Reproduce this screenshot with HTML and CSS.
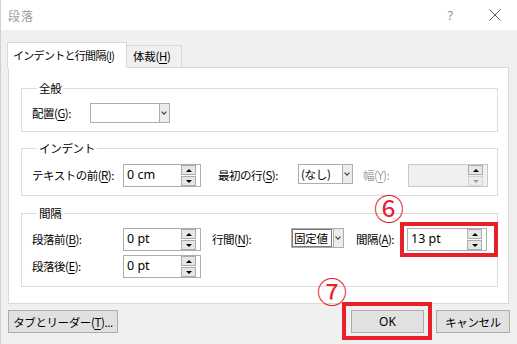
FILE: index.html
```html
<!DOCTYPE html>
<html lang="ja">
<head>
  <meta charset="UTF-8" />
  <title>段落</title>
  <link rel="stylesheet" href="styles.css">
</head>
<body>
  <div id="dialog">
    <div class="titlebar">
      <span class="title">段落</span>
      <span class="help">?</span>
      <svg class="close" width="12" height="12" viewBox="0 0 12 12">
        <path d="M0.5 0.5 L11.5 11.5 M11.5 0.5 L0.5 11.5" stroke="#5a5a5a" stroke-width="1" fill="none" />
      </svg>
    </div>

    <div class="tabs">
      <div class="tab active">インデントと行間隔(<u>I</u>)</div>
      <div class="tab">体裁(<u>H</u>)</div>
    </div>

    <div class="panel">
      <!-- 全般 -->
      <fieldset class="grp g1">
        <legend>全般</legend>
        <div class="row">
          <label class="lbl w58">配置(<u>G</u>):</label>
          <div class="combo w80"><span class="val"></span><span class="arrow"></span></div>
        </div>
      </fieldset>

      <!-- インデント -->
      <fieldset class="grp g2">
        <legend>インデント</legend>
        <div class="row">
          <label class="lbl w91">テキストの前(<u>R</u>):</label>
          <div class="spin w78"><span class="val">0 cm</span><span class="btns"><span class="up"></span><span class="dn"></span></span></div>
          <label class="lbl w80 ml17">最初の行(<u>S</u>):</label>
          <div class="combo w55"><span class="val">(なし)</span><span class="arrow"></span></div>
          <label class="lbl w45 ml10 off">幅(<u>Y</u>):</label>
          <div class="spin w80 disabled"><span class="val"></span><span class="btns"><span class="up"></span><span class="dn"></span></span></div>
        </div>
      </fieldset>

      <!-- 間隔 -->
      <fieldset class="grp g3">
        <legend>間隔</legend>
        <div class="row">
          <label class="lbl w91">段落前(<u>B</u>):</label>
          <div class="spin w78"><span class="val">0 pt</span><span class="btns"><span class="up"></span><span class="dn"></span></span></div>
          <label class="lbl w79 ml11">行間(<u>N</u>):</label>
          <div class="combo w53"><span class="val sel">固定値</span><span class="arrow"></span></div>
          <label class="lbl w51 ml12">間隔(<u>A</u>):</label>
          <div class="spin w80 marked"><span class="val">13 pt</span><span class="btns"><span class="up"></span><span class="dn"></span></span></div>
        </div>
        <div class="row">
          <label class="lbl w91">段落後(<u>E</u>):</label>
          <div class="spin w78"><span class="val">0 pt</span><span class="btns"><span class="up"></span><span class="dn"></span></span></div>
        </div>
      </fieldset>
    </div>

    <div class="buttons">
      <button class="btn tabs-btn">タブとリーダー(<u>T</u>)...</button>
      <span class="spacer"></span>
      <button class="btn ok marked-btn">OK</button>
      <button class="btn cancel">キャンセル</button>
    </div>

    <span class="mark m6">⑥</span>
    <span class="mark m7">⑦</span>
  </div>
</body>
</html>
```

FILE: styles.css
```css
body {
  margin: 0;
  background: #f0f0f0;
  font-family: "Meiryo UI", "Noto Sans CJK JP", sans-serif;
  font-size: 11.5px;
  color: #000;
}
#dialog {
  position: relative;
  width: 517px;
  height: 344px;
  background: #f0f0f0;
  border-left: 1px solid #d0d0d0;
  box-sizing: border-box;
  overflow: hidden;
}
u {
  text-decoration-thickness: 1px;
  text-underline-offset: 2px;
}

/* Title bar */
.titlebar {
  height: 30px;
  background: #fff;
  display: flex;
  align-items: center;
  padding-left: 7px;
}
.title {
  color: #a0a0a0;
  font-size: 12px;
  letter-spacing: 1px;
}
.help {
  margin-left: auto;
  color: #8a8a8a;
  font-family: "Noto Sans", sans-serif;
  font-size: 12px;
  margin-right: 36px;
}
.close {
  margin-right: 16px;
}

/* Tabs */
.tabs {
  display: flex;
  align-items: flex-end;
  margin-top: 12px;
  padding-left: 6px;
  height: 25px;
}
.tab {
  height: 22px;
  box-sizing: border-box;
  border: 1px solid #d9d9d9;
  border-bottom: none;
  background: #f0f0f0;
  padding: 0 6px;
  line-height: 21px;
  font-size: 11.5px;
  letter-spacing: -0.3px;
  white-space: nowrap;
}
.tab.active {
  width: 120px;
  height: 26px;
  background: #fff;
  margin-bottom: -1px;
  padding-left: 5px;
  line-height: 24px;
  font-size: 11px;
  letter-spacing: -0.7px;
  overflow: hidden;
  position: relative;
  z-index: 2;
}
.tab:not(.active) {
  width: 55px;
  border-left: none;
}

/* Panel */
.panel {
  margin-left: 7px;
  width: 501px;
  height: 237px;
  box-sizing: border-box;
  background: #fff;
  border: 1px solid #d9d9d9;
  padding: 12px 10px 0 12px;
}
.grp {
  margin: 0;
  padding: 0;
  border: 1px solid #dcdcdc;
  min-width: 0;
}
.grp legend {
  margin-left: 5px;
  padding: 0 2px;
  height: 16px;
  line-height: 16px;
  letter-spacing: -0.3px;
}
.g1 { padding: 7px 10px 8px; }
.g2 { padding: 8px 10px 8px; margin-top: 8px; }
.g3 { padding: 7px 10px 8px; margin-top: 9px; }
.g3 .row + .row { margin-top: 4px; }

.row {
  display: flex;
  align-items: flex-start;
}
.lbl {
  height: 23px;
  line-height: 22px;
  letter-spacing: -0.5px;
  white-space: nowrap;
  flex: none;
}
.g1 .lbl { height: 20px; line-height: 20px; }
.lbl.off { color: #a0a0a0; }
.w45 { width: 45px; }
.w51 { width: 51px; }
.w53 { width: 53px; }
.w55 { width: 55px; }
.w58 { width: 58px; }
.w78 { width: 78px; }
.w79 { width: 79px; }
.w80 { width: 80px; }
.w91 { width: 91px; }
.ml10 { margin-left: 10px; }
.ml11 { margin-left: 11px; }
.ml12 { margin-left: 12px; }
.ml17 { margin-left: 17px; }

/* Combo box */
.combo {
  display: flex;
  height: 20px;
  box-sizing: border-box;
  border: 1px solid #adadad;
  background: #fff;
  flex: none;
}
.combo .val {
  flex: 1;
  line-height: 18px;
  padding-left: 2px;
  white-space: nowrap;
  overflow: hidden;
  letter-spacing: -0.3px;
}
.combo .val.sel {
  border: 1px solid #7a7a7a;
  line-height: 16px;
  margin: 0 1px 0 0;
  padding-left: 1px;
}
.combo .arrow {
  width: 9px;
  border-left: 1px solid #adadad;
  background: #ececec;
  position: relative;
}
.combo .arrow::after {
  content: "";
  position: absolute;
  left: 2px;
  top: 6px;
  width: 3px;
  height: 3px;
  border-right: 1px solid #333;
  border-bottom: 1px solid #333;
  transform: rotate(45deg);
}

/* Spin box */
.spin {
  display: flex;
  height: 23px;
  box-sizing: border-box;
  border: 1px solid #adadad;
  background: #fff;
  flex: none;
  position: relative;
}
.spin .val {
  flex: 1;
  padding-left: 3px;
  line-height: 20px;
  font-family: "Noto Sans", "Noto Sans CJK JP", sans-serif;
  font-size: 12.5px;
}
.spin .btns {
  width: 15px;
  margin: 0 4px 0 0;
  display: flex;
  flex-direction: column;
  gap: 1px;
}
.spin .btns span {
  height: 8px;
  border: 1px solid #adadad;
  background: #e6e6e6;
  display: flex;
  align-items: center;
  justify-content: center;
}
.spin .btns .up::before,
.spin .btns .dn::before {
  content: "";
  border-left: 3px solid transparent;
  border-right: 3px solid transparent;
}
.spin .btns .up::before { border-bottom: 3px solid #000; }
.spin .btns .dn::before { border-top: 3px solid #000; }
.spin.disabled {
  background: #f0f0f0;
  border-color: #c8c8c8;
}
.spin.disabled .btns .dn { border-color: #d4d4d4; background: #ececec; }
.spin.disabled .btns .dn::before { border-top-color: #9a9a9a; }

/* Buttons */
.buttons {
  display: flex;
  margin-top: 6px;
  padding: 0 7px 0 7px;
  gap: 12px;
}
.spacer { flex: 1; }
.btn {
  height: 23px;
  box-sizing: border-box;
  border: 1px solid #adadad;
  background: #e1e1e1;
  font-family: inherit;
  font-size: 11.5px;
  color: #000;
  padding: 0;
  position: relative;
}
.tabs-btn { width: 110px; letter-spacing: -0.4px; }
.ok { width: 73px; font-family: "Noto Sans", sans-serif; font-size: 12px; }
.cancel { width: 74px; letter-spacing: -0.4px; }

/* Red annotation boxes */
.spin.marked::after {
  content: "";
  position: absolute;
  left: -8px;
  top: -7px;
  right: -12px;
  bottom: -7px;
  border: 4px solid #e8202a;
}
.marked-btn::after {
  content: "";
  position: absolute;
  left: -10px;
  top: -9px;
  right: -9px;
  bottom: -8px;
  border: 4px solid #e8202a;
}

/* Circled step numbers */
.mark {
  position: absolute;
  color: #e8202a;
  font-family: "Noto Sans CJK JP", sans-serif;
  font-size: 30px;
  line-height: 30px;
}
.m6 { left: 373px; top: 192px; }
.m7 { left: 316px; top: 275px; }
```
